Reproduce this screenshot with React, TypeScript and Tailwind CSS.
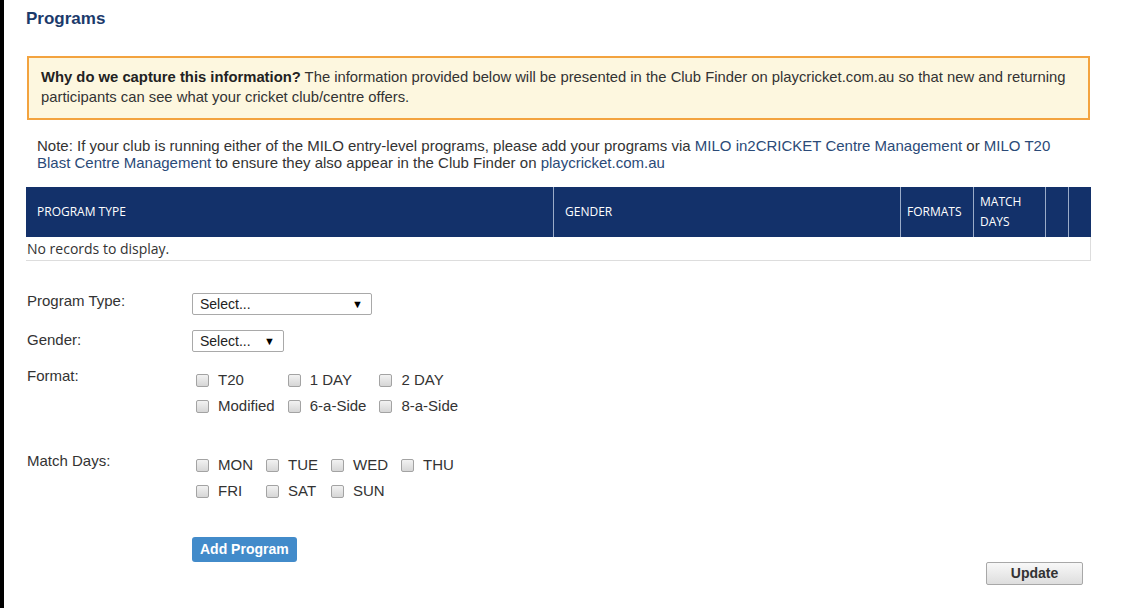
import React from "react";

const Box = () => (
  <span className="ml-[4px] mr-[9px] h-[13px] w-[13px] shrink-0 rounded-[2px] border border-[#a3a3a3] bg-linear-to-b from-[#f2f2f2] to-[#d6d6d6]" />
);

const Check = ({ label }: { label: string }) => (
  <div className="flex h-[26px] items-center whitespace-nowrap">
    <Box />
    <span>{label}</span>
  </div>
);

const Select = ({ w }: { w: string }) => (
  <div
    className={`${w} flex h-[22px] items-center justify-between rounded-[2px] border border-[#a9a9a9] bg-white pl-[7px] pr-[8px] text-[14px] text-[#222]`}
  >
    <span>Select...</span>
    <span className="text-[11px] leading-none text-black">▼</span>
  </div>
);

export default function App() {
  return (
    <div className="flex h-[608px] w-[1132px] overflow-hidden bg-white font-['Liberation_Sans',Arial,sans-serif] text-[15px] text-[#333]">
      <div className="w-[4px] shrink-0 bg-black" />
      <div className="flex w-[1087px] flex-col pl-[22px] pt-[9px]">
        <h1 className="text-[17px] font-bold leading-[20px] text-[#1b3a6b]">Programs</h1>

        <div className="ml-[1px] mt-[27px] w-[1063px] border-2 border-[#f3a33f] bg-[#fdf7df] pb-[11px] pl-[12px] pr-[8px] pt-[9px] text-[14.8px] leading-[20px]">
          <b className="text-[#222]">Why do we capture this information?</b> The information provided below will be
          presented in the Club Finder on playcricket.com.au so that new and returning participants can see what your
          cricket club/centre offers.
        </div>

        <p className="mt-[17px] w-[1065px] pl-[11px] pr-[8px] leading-[17px]">
          Note: If your club is running either of the MILO entry-level programs, please add your programs via{" "}
          <span className="text-[#2b4a78]">MILO in2CRICKET Centre Management</span> or{" "}
          <span className="text-[#2b4a78]">MILO T20 Blast Centre Management</span> to ensure they also appear in the
          Club Finder on <span className="text-[#2b4a78]">playcricket.com.au</span>
        </p>

        <div className="mt-[16px] w-[1065px] font-['Open_Sans',sans-serif]">
          <div className="grid h-[50px] grid-cols-[527px_347px_73px_72px_23px_23px] bg-[#13316a] text-[12px] leading-[20px] text-white">
            <div className="flex items-center pl-[11px]">PROGRAM TYPE</div>
            <div className="flex items-center border-l border-[#9aabc8] pl-[11px]">GENDER</div>
            <div className="flex items-center border-l border-[#9aabc8] pl-[6px]">FORMATS</div>
            <div className="flex items-center border-l border-[#9aabc8] pl-[6px]">
              MATCH
              <br />
              DAYS
            </div>
            <div className="border-l border-[#9aabc8]" />
            <div className="border-l border-[#9aabc8]" />
          </div>
          <div className="flex h-[24px] items-center border-b border-r border-[#dddddd] pl-[1px] text-[14px] text-[#333]">
            No records to display.
          </div>
        </div>

        <div className="mt-[32px] flex items-start">
          <div className="w-[166px] pl-[1px] leading-[16px]">Program Type:</div>
          <Select w="w-[180px]" />
        </div>
        <div className="mt-[15px] flex items-start">
          <div className="w-[166px] pl-[1px] pt-[2px] leading-[16px]">Gender:</div>
          <Select w="w-[92px]" />
        </div>

        <div className="mt-[15px] flex items-start">
          <div className="w-[166px] pl-[1px] leading-[17px]">Format:</div>
          <div className="grid grid-cols-[auto_auto_auto] gap-x-[9px]">
            <Check label="T20" />
            <Check label="1 DAY" />
            <Check label="2 DAY" />
            <Check label="Modified" />
            <Check label="6-a-Side" />
            <Check label="8-a-Side" />
          </div>
        </div>

        <div className="mt-[33px] flex items-start">
          <div className="w-[166px] pl-[1px] leading-[17px]">Match Days:</div>
          <div className="grid grid-cols-[auto_auto_auto_auto] gap-x-[9px]">
            <Check label="MON" />
            <Check label="TUE" />
            <Check label="WED" />
            <Check label="THU" />
            <Check label="FRI" />
            <Check label="SAT" />
            <Check label="SUN" />
          </div>
        </div>

        <div className="ml-[166px] mt-[33px] flex">
          <button className="h-[25px] rounded-[3px] bg-[#428bca] px-[8px] text-[14px] font-bold text-white">
            Add Program
          </button>
        </div>

        <div className="flex w-[1065px] justify-end pr-[8px]">
          <button className="h-[23px] w-[97px] rounded-[2px] border border-[#a8a8a8] bg-linear-to-b from-[#f8f8f8] to-[#dedede] text-[14px] font-bold text-[#333]">
            Update
          </button>
        </div>
      </div>
    </div>
  );
}
